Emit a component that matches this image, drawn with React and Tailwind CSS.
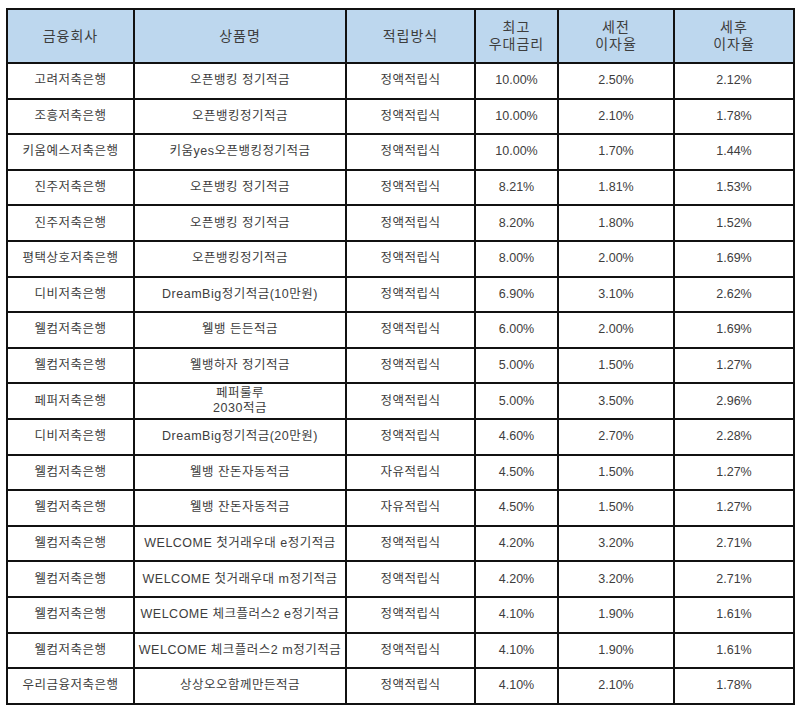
const rows = [
  ["고려저축은행", "오픈뱅킹 정기적금", "정액적립식", "10.00%", "2.50%", "2.12%"],
  ["조흥저축은행", "오픈뱅킹정기적금", "정액적립식", "10.00%", "2.10%", "1.78%"],
  ["키움예스저축은행", "키움yes오픈뱅킹정기적금", "정액적립식", "10.00%", "1.70%", "1.44%"],
  ["진주저축은행", "오픈뱅킹 정기적금", "정액적립식", "8.21%", "1.81%", "1.53%"],
  ["진주저축은행", "오픈뱅킹 정기적금", "정액적립식", "8.20%", "1.80%", "1.52%"],
  ["평택상호저축은행", "오픈뱅킹정기적금", "정액적립식", "8.00%", "2.00%", "1.69%"],
  ["디비저축은행", "DreamBig정기적금(10만원)", "정액적립식", "6.90%", "3.10%", "2.62%"],
  ["웰컴저축은행", "웰뱅 든든적금", "정액적립식", "6.00%", "2.00%", "1.69%"],
  ["웰컴저축은행", "웰뱅하자 정기적금", "정액적립식", "5.00%", "1.50%", "1.27%"],
  ["페퍼저축은행", "페퍼룰루\n2030적금", "정액적립식", "5.00%", "3.50%", "2.96%"],
  ["디비저축은행", "DreamBig정기적금(20만원)", "정액적립식", "4.60%", "2.70%", "2.28%"],
  ["웰컴저축은행", "웰뱅 잔돈자동적금", "자유적립식", "4.50%", "1.50%", "1.27%"],
  ["웰컴저축은행", "웰뱅 잔돈자동적금", "자유적립식", "4.50%", "1.50%", "1.27%"],
  ["웰컴저축은행", "WELCOME 첫거래우대 e정기적금", "정액적립식", "4.20%", "3.20%", "2.71%"],
  ["웰컴저축은행", "WELCOME 첫거래우대 m정기적금", "정액적립식", "4.20%", "3.20%", "2.71%"],
  ["웰컴저축은행", "WELCOME 체크플러스2 e정기적금", "정액적립식", "4.10%", "1.90%", "1.61%"],
  ["웰컴저축은행", "WELCOME 체크플러스2 m정기적금", "정액적립식", "4.10%", "1.90%", "1.61%"],
  ["우리금융저축은행", "상상오오함께만든적금", "정액적립식", "4.10%", "2.10%", "1.78%"],
]

const headers = ["금융회사", "상품명", "적립방식", "최고\n우대금리", "세전\n이자율", "세후\n이자율"]
const widths = ["w-[127px]", "w-[212px]", "w-[129px]", "w-[83px]", "w-[116px]", "w-[120px]"]

export default function App() {
  return (
    <div className="w-[800px] h-[706px] bg-white pt-[8px] pl-[6px]" style={{ fontFamily: '"Liberation Sans", "Noto Sans CJK KR", sans-serif' }}>
      <table className="table-fixed border-collapse w-[787px] text-[#3d3d3d]">
        <thead>
          <tr className="h-[54px] bg-[#bdd7ee]">
            {headers.map((h, i) => (
              <th key={i} className={`${widths[i]} border-2 border-[#111] font-normal text-[14px] leading-[17px] tracking-[1px] text-center whitespace-pre-line`}>
                {h}
              </th>
            ))}
          </tr>
        </thead>
        <tbody>
          {rows.map((r, ri) => (
            <tr key={ri} className="h-[35.6px]">
              {r.map((c, ci) => (
                <td key={ci} className={`border-2 border-[#111] text-center whitespace-pre-line p-0 ${ci === 1 && r[1].length > 20 ? "text-[12.5px] tracking-[0.3px]" : "text-[12.5px]"} ${ci < 3 ? "tracking-[0.5px]" : ""} leading-[15px]`}>
                  {c}
                </td>
              ))}
            </tr>
          ))}
        </tbody>
      </table>
    </div>
  )
}
